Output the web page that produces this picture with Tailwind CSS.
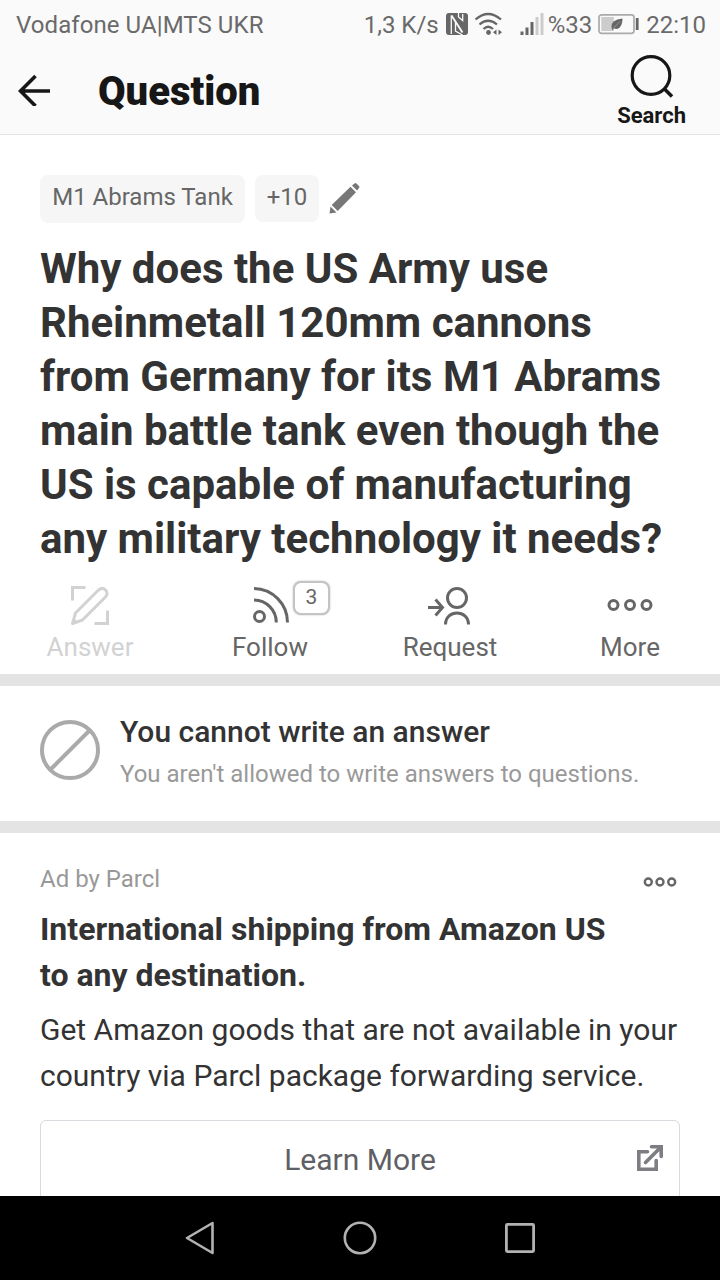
<!DOCTYPE html>
<html lang="en">
<head>
<meta charset="utf-8">
<title>Question</title>
<script src="https://cdn.jsdelivr.net/npm/@tailwindcss/browser@4"></script>
</head>
<body class="bg-white font-['Roboto',sans-serif] text-[#333]">
<div class="flex h-[1280px] w-[720px] flex-col overflow-hidden whitespace-nowrap">
  <header class="h-[135px] shrink-0 border-b border-[#e4e4e4] bg-[#fafafa]">
    <div class="flex h-[50px] justify-between pl-4 pr-[15px] text-[24px] leading-[50px] text-[#6a6a6a]">
      <span class="tracking-[0.07px]">Vodafone UA|MTS UKR</span>
      <div class="flex">
        <span>1,3 K/s</span>
        <svg class="ml-[6px] mt-3 h-6 w-6" viewBox="0 0 24 24"><rect x="1" y="1" width="22" height="22" rx="3" fill="#666"/><path d="M6.300 22V3.500M10.500 9.500V19L17.500 23M13.500 1V5L17.700 8.500V2" fill="none" stroke="#fafafa" stroke-width="1.300"/><path d="M6.500 3.500L17.500 20.500" stroke="#fafafa" stroke-width="1.900"/></svg>
        <svg class="ml-[6px] mt-3 h-6 w-7" viewBox="0 0 28 24" fill="none" stroke="#666" stroke-width="2.200"><path d="M.500 7.500Q13 -3.500 26 7.500M4.500 12.500Q13 5 22 12.500M8.500 17Q13 12.500 18 17"/><circle cx="13.500" cy="20.500" r="2.400" fill="#666" stroke="none"/><path d="M21.500 17.500V23L18 20.200ZM23.500 17.500V23L27 20.200Z" fill="#666" stroke="none"/></svg>
        <svg class="ml-[17px] mt-3 h-6 w-6" viewBox="0 0 24 24" stroke-width="3"><path d="M2 19.500V23M7 15.500V23M12 10V23" stroke="#666"/><path d="M17 5V23M22 1V23" stroke="#ccc"/></svg>
        <span class="ml-[4px]">%33</span>
        <svg class="ml-[6px] mt-3 h-6 w-[41px]" viewBox="0 0 41 24"><rect x="1" y="2.800" width="35" height="18.500" rx="2.500" fill="none" stroke="#aaa" stroke-width="1.700"/><rect x="3.300" y="5" width="12.500" height="14" fill="#ccc"/><path d="M14 17.500C12 10 17 7.500 24.500 6.500C24.500 14 21 18.500 16 16.500L14.500 18Z" fill="#666"/><path d="M15 16.500L22 9.500" stroke="#ccc" stroke-width=".5"/><path d="M39.200 6V18" stroke="#666" stroke-width="2.800"/></svg>
        <span class="ml-[7px] -mr-px">22:10</span>
      </div>
    </div>
    <div class="flex h-[84px] pl-[18px]">
      <svg class="mt-[24px] h-8 w-8" viewBox="0 0 32 32" fill="none" stroke="#171717" stroke-width="3.600"><path d="M32 17H3M17.500 2L2.500 17L17.500 32"/></svg>
      <h1 class="ml-12 text-[40px] font-black leading-[84px] text-[#171717]">Question</h1>
      <div class="ml-auto mr-[34px] flex flex-col items-center">
        <svg class="mt-1 h-[46px] w-[46px]" viewBox="0 0 46 46" fill="none" stroke="#171717" stroke-width="3.200"><circle cx="22" cy="21.500" r="18.800"/><path d="M35.500 35L43 42.500" stroke-width="3.500"/></svg>
        <span class="mt-[3px] text-[22px] font-bold leading-[26px] text-[#171717]">Search</span>
      </div>
    </div>
  </header>

  <section class="h-[539px] shrink-0 px-10 pt-10">
    <div class="flex text-[24px] leading-[45px] text-[#666]">
      <span class="h-12 w-[205px] rounded-lg bg-[#f6f6f6] text-center">M1 Abrams Tank</span>
      <span class="ml-[10px] h-[47px] w-16 rounded-lg bg-[#f6f6f6] text-center">+10</span>
      <svg class="ml-[10px] mt-[7px] h-8 w-8" viewBox="0 0 32 32" fill="#777"><path d="M.500 31.500L1.500 24.500L7.500 30.500ZM2.700 23L21.500 4.700L27 10.200L8.700 29ZM23 3.500L25.500 1.500Q26.500 .5 27.500 1.500L30 4Q31 5 30 6L28 8.500Z"/></svg>
    </div>
    <h2 class="mt-[19px] text-[42px] font-bold leading-[54px]">Why does the US Army use<br>Rheinmetall 120mm cannons<br>from Germany for its M1 Abrams<br>main battle tank even though the<br>US is capable of manufacturing<br>any military technology it needs?</h2>
    <div class="-mx-10 mt-[15px] grid grid-cols-4 text-center text-[26px] leading-[30px] text-[#666]">
      <div class="flex flex-col items-center text-[#d2d2d2]">
        <svg class="h-12 w-12" viewBox="0 0 48 48" fill="none" stroke="currentColor" stroke-width="3"><path d="M19.500 6.500H6.500V19.500M28.500 42.500H41.500V29.500"/><path d="M6.500 42.500L9.500 32L32 9.500Q36 5.500 39.500 9Q43 12.500 39 16.500L16.500 39Z" stroke-linejoin="round"/><path d="M6 43L7.500 37L12 41Z" fill="currentColor" stroke="none"/></svg>
        <span class="mt-[3px]">Answer</span>
      </div>
      <div class="relative flex flex-col items-center">
        <svg class="h-12 w-12" viewBox="0 0 48 48" fill="none" stroke="currentColor" stroke-width="3"><circle cx="13.500" cy="35.500" r="5"/><path d="M8 7.500A34 34 0 0 1 41.500 41.500M8 19A22.500 22.500 0 0 1 30.300 41.500"/></svg>
        <span class="absolute left-[113px] top-0 h-[34px] w-[37px] rounded-lg border-2 border-[#c4c4c4] bg-white text-[21px] leading-[29px] shadow-[0_0_2px_#bbb]">3</span>
        <span class="mt-[3px]">Follow</span>
      </div>
      <div class="flex flex-col items-center">
        <svg class="h-12 w-12" viewBox="0 0 48 48" fill="none" stroke="currentColor" stroke-width="3"><circle cx="31" cy="17" r="9.500"/><path d="M19.500 43.500C19.500 28 42.500 28 42.500 43.500M2 26.500H16M9.500 18.500L16.500 26.500L9.500 34.500"/></svg>
        <span class="mt-[3px]">Request</span>
      </div>
      <div class="flex flex-col items-center">
        <svg class="h-12 w-12" viewBox="0 0 48 48" fill="none" stroke="currentColor" stroke-width="3"><circle cx="7.500" cy="24" r="4.500"/><circle cx="24" cy="24" r="4.500"/><circle cx="40.500" cy="24" r="4.500"/></svg>
        <span class="mt-[3px]">More</span>
      </div>
    </div>
  </section>

  <section class="flex h-[159px] shrink-0 border-y-12 border-[#e4e4e4] pl-10">
    <svg class="mt-[34px] h-[60px] w-[60px]" viewBox="0 0 60 60" fill="none" stroke="#aaa" stroke-width="4"><circle cx="30" cy="30" r="28"/><path d="M10 50L50 10"/></svg>
    <div class="ml-5 pt-[28px]">
      <h3 class="text-[30px] font-medium leading-9">You cannot write an answer</h3>
      <p class="mt-[8px] text-[24px] leading-8 text-[#999]">You aren't allowed to write answers to questions.</p>
    </div>
  </section>

  <section class="h-[363px] shrink-0 overflow-hidden px-10 pt-[30px]">
    <div class="flex justify-between text-[24px] leading-8 text-[#999]">
      <span>Ad by Parcl</span>
      <svg class="mr-[3px] mt-[12px] h-3 w-[34px]" viewBox="0 0 34 12" fill="none" stroke="#666" stroke-width="2.400"><circle cx="5.300" cy="7" r="3.500"/><circle cx="17" cy="7" r="3.500"/><circle cx="28.700" cy="7" r="3.500"/></svg>
    </div>
    <h3 class="mt-[11px] text-[32px] font-bold leading-[46px]">International shipping from Amazon US<br>to any destination.</h3>
    <p class="mt-[9px] text-[30px] leading-[46px]">Get Amazon goods that are not available in your<br>country via Parcl package forwarding service.</p>
    <div class="relative mt-[21px] h-20 rounded-md border border-[#d9d9df] text-center text-[30px] leading-[78px] text-[#5f6066]">Learn More
      <svg class="absolute right-[15px] top-[23px] h-[28px] w-[28px]" viewBox="0 0 28 28" fill="none" stroke="#7d7e83" stroke-width="3.600"><path d="M11.500 7.800H2.800V25.200H20.200V16.500M15.500 2.800H25.200V12.500M25 3L9.500 18.500" stroke-linecap="round"/></svg>
    </div>
  </section>

  <nav class="flex h-[84px] shrink-0 items-center justify-center gap-[126px] bg-black">
    <svg class="h-[34px] w-[34px]" viewBox="0 0 34 34" fill="none" stroke="#b2b2b2" stroke-width="2.600" stroke-linejoin="round"><path d="M29.500 2V32L4 17Z"/></svg>
    <svg class="h-[34px] w-[34px]" viewBox="0 0 34 34" fill="none" stroke="#b2b2b2" stroke-width="2.600"><circle cx="17" cy="17" r="15.200"/></svg>
    <svg class="h-[34px] w-[34px]" viewBox="0 0 34 34" fill="none" stroke="#b2b2b2" stroke-width="2.800"><rect x="3.400" y="3.400" width="27.200" height="27.200" rx="1"/></svg>
  </nav>
</div>
</body>
</html>
